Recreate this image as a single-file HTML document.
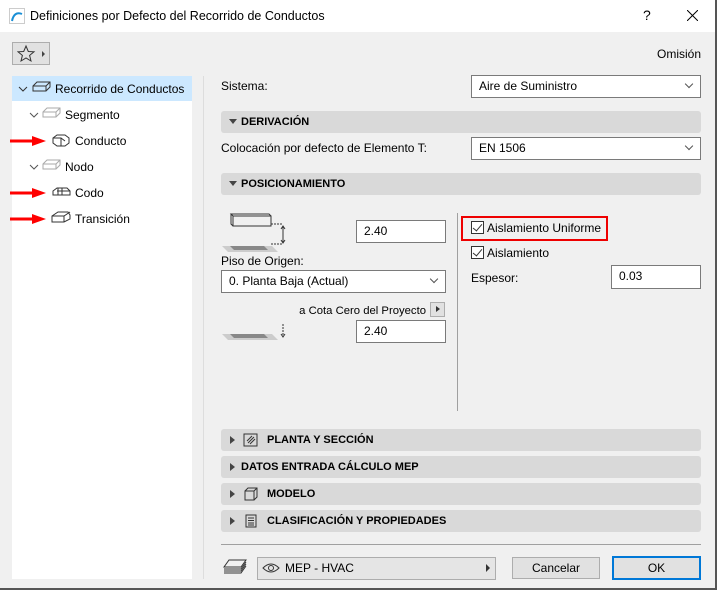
<!DOCTYPE html><html><head><style>
*{box-sizing:border-box;margin:0;padding:0}
body{width:717px;height:590px;background:#f0f0f0;font-family:"Liberation Sans",sans-serif;font-size:12px;color:#000;position:relative;overflow:hidden}
.a{position:absolute}
.t{position:absolute;white-space:nowrap;line-height:14px}
.dd,.in{position:absolute;background:#fff;border:1px solid #7a7a7a;padding-left:7px;line-height:20px}
.dd:after{content:"";position:absolute;right:8px;top:5px;width:5px;height:5px;border-right:1px solid #555;border-bottom:1px solid #555;transform:rotate(45deg)}
.bar{position:absolute;left:221px;width:480px;height:22px;background:#d9d9d9;border-radius:3px;font-weight:bold;font-size:11px;line-height:22px}
.tri{position:absolute;left:8px;top:8px;width:0;height:0;border-left:4px solid transparent;border-right:4px solid transparent;border-top:5px solid #444}
.trr{position:absolute;left:9px;top:7px;width:0;height:0;border-top:4px solid transparent;border-bottom:4px solid transparent;border-left:5px solid #444}
.cb{position:absolute;width:13px;height:13px;border:1px solid #333;background:#fff}
.cb:after{content:"";position:absolute;left:3px;top:0px;width:4px;height:8px;border-right:1.5px solid #333;border-bottom:1.5px solid #333;transform:rotate(40deg)}
.arrow{position:absolute;left:10px;width:36px;height:10px}
</style></head><body>
<div class="a" style="left:0;top:0;width:717px;height:32px;background:#fff"></div>
<svg class="a" style="left:9px;top:8px" width="16" height="16"><rect x="0.5" y="0.5" width="15" height="15" fill="#fff" stroke="#ccc"/><path d="M3 13 Q5 3 13 6" stroke="#1a8fd6" stroke-width="2" fill="none"/></svg>
<div class="t" style="left:30px;top:9px;font-size:12.5px">Definiciones por Defecto del Recorrido de Conductos</div>
<div class="t" style="left:643px;top:8px;font-size:14px">?</div>
<svg class="a" style="left:687px;top:10px" width="11" height="11"><path d="M0 0L11 11M11 0L0 11" stroke="#000" stroke-width="1"/></svg>
<div class="a" style="left:12px;top:42px;width:38px;height:23px;border:1px solid #adadad;background:#e1e1e1"></div>
<svg class="a" style="left:17px;top:44px" width="30" height="20"><path d="M9 2 L11.3 7.5 17 7.8 12.6 11.4 14 17 9 14 4 17 5.4 11.4 1 7.8 6.7 7.5Z" fill="none" stroke="#333"/><path d="M25 7 L28 10 25 13Z" fill="#444"/></svg>
<div class="t" style="right:16px;top:47px">Omisión</div>
<div class="a" style="left:12px;top:76px;width:180px;height:503px;background:#fff"></div>
<div class="a" style="left:12px;top:76px;width:180px;height:25px;background:#cce8ff"></div>
<div class="a" style="left:203px;top:76px;width:1px;height:503px;background:#ddd"></div>
<svg class="a" style="left:12px;top:76px" width="180" height="160" fill="none" stroke="#333">
<path d="M7 11l4 4 4-4"/><path d="M21 10l4-4h13v5l-4 4h-13z M21 10h13v5 M34 10l4-4" />
<path d="M18 37l4 4 4-4" stroke="#555"/><path d="M31 36l4-4h13v5l-4 4h-13z M31 36h13v5 M44 36l4-4" stroke="#aaa"/>
<path d="M41 62l4-3h8l4 3v5l-4 3h-8l-4-3z M41 62h8l4 3 M49 62v8" />
<path d="M18 89l4 4 4-4" stroke="#555"/><path d="M31 88l4-4h13v5l-4 4h-13z M31 88h13v5 M44 88l4-4" stroke="#aaa"/>
<path d="M41 115l4-3h10l3 3v4h-17z M46 112v7 M50 112v7 M45 115h13" />
<path d="M40 140l6-4h10l2 3v4l-6 3h-12z M40 140h12l6-4 M52 140v6" />
</svg>
<div class="t" style="left:55px;top:82px">Recorrido de Conductos</div>
<div class="t" style="left:65px;top:108px">Segmento</div>
<div class="t" style="left:75px;top:134px">Conducto</div>
<div class="t" style="left:65px;top:160px">Nodo</div>
<div class="t" style="left:75px;top:186px">Codo</div>
<div class="t" style="left:75px;top:212px">Transición</div>
<svg class="arrow" style="top:136px" viewBox="0 0 36 10"><path d="M0 3.5h22V0l14 5-14 5V6.5H0z" fill="#f00"/></svg>
<svg class="arrow" style="top:188px" viewBox="0 0 36 10"><path d="M0 3.5h22V0l14 5-14 5V6.5H0z" fill="#f00"/></svg>
<svg class="arrow" style="top:214px" viewBox="0 0 36 10"><path d="M0 3.5h22V0l14 5-14 5V6.5H0z" fill="#f00"/></svg>

<div class="t" style="left:221px;top:79px">Sistema:</div>
<div class="dd" style="left:471px;top:75px;width:230px;height:23px">Aire de Suministro</div>
<div class="bar" style="top:111px"><div class="tri"></div><span style="margin-left:20px">DERIVACIÓN</span></div>
<div class="t" style="left:221px;top:141px">Colocación por defecto de Elemento T:</div>
<div class="dd" style="left:471px;top:137px;width:230px;height:23px">EN 1506</div>
<div class="bar" style="top:173px"><div class="tri"></div><span style="margin-left:20px">POSICIONAMIENTO</span></div>

<svg class="a" style="left:220px;top:213px" width="70" height="40" fill="none"><path d="M2 33h50l6 6h-50z" fill="#ccc"/><path d="M10 33h34l4 4h-34z" fill="#888"/><path d="M13 3h38v10h-38z M13 3l-2-2h38l2 2 M11 1v10l2 2" stroke="#333"/><path d="M51 11h12 M51 31h12" stroke="#333" stroke-dasharray="2,1"/><path d="M63 14v15 M61 16l2-3 2 3 M61 27l2 3 2-3" stroke="#333"/></svg>
<div class="in" style="left:356px;top:220px;width:90px;height:23px">2.40</div>
<div class="t" style="left:221px;top:254px">Piso de Origen:</div>
<div class="dd" style="left:221px;top:270px;width:225px;height:23px">0. Planta Baja (Actual)</div>
<div class="t" style="right:291px;top:304px;font-size:11.3px">a Cota Cero del Proyecto</div>
<div class="a" style="left:430px;top:302px;width:15px;height:15px;background:#e1e1e1;border:1px solid #adadad"><div style="position:absolute;left:5px;top:3px;border-top:3.5px solid transparent;border-bottom:3.5px solid transparent;border-left:4px solid #333"></div></div>
<svg class="a" style="left:220px;top:320px" width="70" height="30" fill="none"><path d="M2 14h50l6 6h-50z" fill="#ccc"/><path d="M10 14h34l4 4h-34z" fill="#888"/><path d="M63 4v12" stroke="#333" stroke-dasharray="2,1"/><path d="M61 14l2 3 2-3" stroke="#333"/></svg>
<div class="in" style="left:356px;top:320px;width:90px;height:23px">2.40</div>
<div class="a" style="left:457px;top:213px;width:1px;height:198px;background:#a0a0a0"></div>
<div class="a" style="left:461px;top:216px;width:147px;height:25px;border:2px solid #e00"></div>
<div class="cb" style="left:471px;top:221px"></div>
<div class="t" style="left:487px;top:221px">Aislamiento Uniforme</div>
<div class="cb" style="left:471px;top:246px"></div>
<div class="t" style="left:487px;top:246px">Aislamiento</div>
<div class="t" style="left:471px;top:271px">Espesor:</div>
<div class="in" style="left:611px;top:265px;width:90px;height:24px">0.03</div>

<div class="bar" style="top:429px"><div class="trr"></div><svg class="a" style="left:22px;top:4px" width="16" height="14" fill="none" stroke="#333"><rect x="1" y="1" width="13" height="12"/><path d="M5 10l6-6 M7 11l5-5 M4 8l5-5" stroke-width="1"/></svg><span style="margin-left:46px">PLANTA Y SECCIÓN</span></div>
<div class="bar" style="top:456px"><div class="trr"></div><span style="margin-left:20px">DATOS ENTRADA CÁLCULO MEP</span></div>
<div class="bar" style="top:483px"><div class="trr"></div><svg class="a" style="left:22px;top:4px" width="16" height="14" fill="none" stroke="#333"><path d="M2 4h9v9h-9z M2 4l3-3h9v9l-3 3 M11 4l3-3"/></svg><span style="margin-left:46px">MODELO</span></div>
<div class="bar" style="top:510px"><div class="trr"></div><svg class="a" style="left:22px;top:4px" width="16" height="14" fill="none" stroke="#333"><rect x="3" y="1" width="10" height="12"/><path d="M5 4h6M5 6.5h6M5 9h6M5 11h6"/></svg><span style="margin-left:46px">CLASIFICACIÓN Y PROPIEDADES</span></div>
<div class="a" style="left:221px;top:544px;width:480px;height:1px;background:#a0a0a0"></div>

<svg class="a" style="left:222px;top:558px" width="26" height="18" fill="none" stroke="#333"><path d="M7 2h17l-5 7h-17z M2 11h17l5-7 M2 13h17l5-7 M2 15h17l5-7"/></svg>
<div class="a" style="left:257px;top:557px;width:239px;height:23px;background:#e5e5e5;border:1px solid #adadad"></div>
<svg class="a" style="left:262px;top:562px" width="18" height="12" fill="none" stroke="#333"><path d="M1 6Q9 -2 17 6Q9 14 1 6z"/><circle cx="9" cy="6" r="2.5"/></svg>
<div class="t" style="left:285px;top:561px">MEP - HVAC</div>
<div class="a" style="left:486px;top:564px;border-top:4px solid transparent;border-bottom:4px solid transparent;border-left:4px solid #333"></div>
<div class="a" style="left:512px;top:557px;width:88px;height:22px;background:#e1e1e1;border:1px solid #adadad;text-align:center;line-height:20px">Cancelar</div>
<div class="a" style="left:612px;top:556px;width:89px;height:24px;background:#e1e1e1;border:2px solid #0078d7;text-align:center;line-height:20px">OK</div>
<div class="a" style="left:0;top:588px;width:717px;height:2px;background:#555"></div>
<div class="a" style="left:715px;top:0;width:2px;height:590px;background:#555"></div>
</body></html>
